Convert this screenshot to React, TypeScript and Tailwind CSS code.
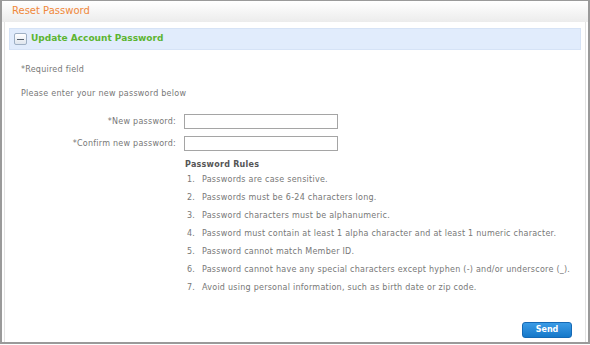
const rules = [
  "Passwords are case sensitive.",
  "Passwords must be 6-24 characters long.",
  "Password characters must be alphanumeric.",
  "Password must contain at least 1 alpha character and at least 1 numeric character.",
  "Password cannot match Member ID.",
  "Password cannot have any special characters except hyphen (-) and/or underscore (_).",
  "Avoid using personal information, such as birth date or zip code.",
];

export default function App() {
  return (
    <div className="h-[345px] w-[590px] bg-white font-['DejaVu_Sans',Verdana,sans-serif]">
      <div className="flex h-[344px] flex-col border-t border-l-2 border-r-2 border-b-2 border-[#9a9a9a]">
        {/* page title */}
        <div className="h-[21px] bg-gradient-to-b from-white to-[#ececec] pl-[10px] pt-[3px] text-[10px] leading-[14px] text-[#f0883a]">
          Reset Password
        </div>

        <div className="flex flex-1 flex-col border-l border-r border-[#e4e4e4] ml-[2px] mr-[2px] px-[4px] pt-[6px]">
          {/* section bar */}
          <div className="flex h-[22px] items-center gap-[4px] border border-[#d6e3f6] bg-[#e1ecfc] pl-[4px]">
            <span className="flex h-[12px] w-[13px] items-center justify-center rounded-[2px] border border-[#9fb0c4] bg-gradient-to-b from-white to-[#dfe6ee]">
              <span className="h-[1px] w-[7px] bg-[#55606c]" />
            </span>
            <span className="text-[9px] font-bold text-[#5cb531]">Update Account Password</span>
          </div>

          <div className="pl-[12px] pt-[14px] text-[8px] tracking-[0.25px] text-[#777]">
            <p className="leading-[12px]">*Required field</p>
            <p className="mt-[12px] leading-[12px]">Please enter your new password below</p>
          </div>

          {/* fields */}
          <div className="mt-[14px] flex flex-col gap-[7px] text-[8px] tracking-[0.25px] text-[#777]">
            <div className="flex items-center">
              <span className="w-[167px] text-right">*New password:</span>
              <input type="password" className="ml-[8px] h-[15px] w-[154px] border border-[#a5a5a5] bg-white" />
            </div>
            <div className="flex items-center">
              <span className="w-[167px] text-right">*Confirm new password:</span>
              <input type="password" className="ml-[8px] h-[15px] w-[154px] border border-[#a5a5a5] bg-white" />
            </div>
          </div>

          {/* rules */}
          <div className="ml-[176px] mt-[8px] text-[8px] tracking-[0.25px] text-[#777]">
            <p className="font-bold leading-[12px] text-[#555]">Password Rules</p>
            <ol className="mt-[3px] flex flex-col gap-[6px]">
              {rules.map((rule, i) => (
                <li key={rule} className="flex leading-[12px]">
                  <span className="w-[17px] pl-[2px]">{i + 1}.</span>
                  <span>{rule}</span>
                </li>
              ))}
            </ol>
          </div>

          <div className="mt-auto mb-[4px] flex justify-end pr-[9px]">
            <button className="h-[16px] w-[50px] rounded-[3px] border border-[#1569b5] bg-gradient-to-b from-[#3a9be6] to-[#1478c9] text-[8px] font-bold text-white">
              Send
            </button>
          </div>
        </div>
      </div>
    </div>
  );
}
